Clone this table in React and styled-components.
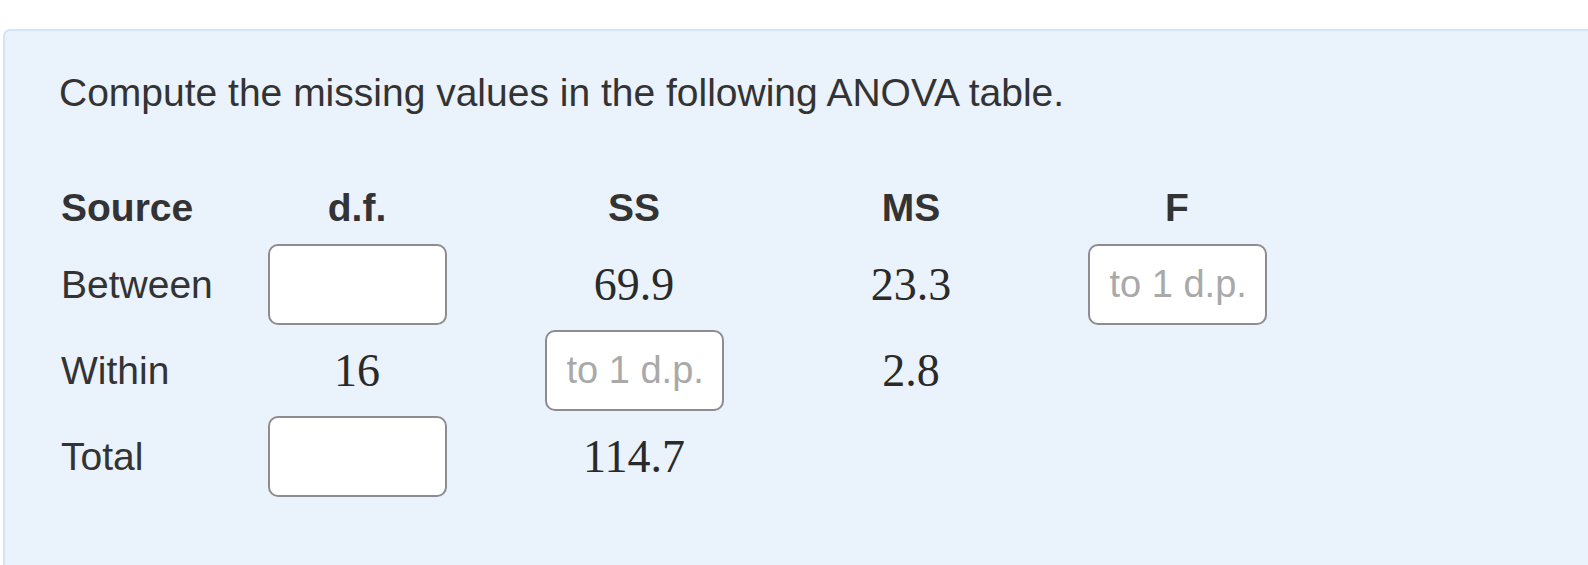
import React from 'react';
import styled, { createGlobalStyle } from 'styled-components';

const GlobalStyle = createGlobalStyle`
  html, body {
    margin: 0;
    padding: 0;
    background: #ffffff;
    overflow: hidden;
  }
  body {
    padding: 29px 0 0 3px;
    font-family: "Liberation Sans", Arial, Helvetica, sans-serif;
    color: #333333;
  }
`;

// rows of the anova table, null = answer box
const rows = [
  { source: 'Between', df: null, ss: '69.9', ms: '23.3', f: 'to 1 d.p.' },
  { source: 'Within', df: '16', ss: 'to 1 d.p.', ms: '2.8', f: '' },
  { source: 'Total', df: null, ss: '114.7', ms: '', f: '' },
];

function Cell({ value }) {
  if (value === null) return <AnswerBox type="text" />;
  if (value.startsWith('to 1')) return <AnswerBox type="text" placeholder={value} />;
  return <Number>{value}</Number>;
}

function App() {
  return (
    <>
      <GlobalStyle />
      <Panel>
        <Question>Compute the missing values in the following ANOVA table.</Question>

        <HeadRow>
          <HeadCell align="left">Source</HeadCell>
          <HeadCell>d.f.</HeadCell>
          <HeadCell>SS</HeadCell>
          <HeadCell>MS</HeadCell>
          <HeadCell>F</HeadCell>
        </HeadRow>

        <Body>
          {rows.map((r) => (
            <Row key={r.source}>
              <Label>{r.source}</Label>
              <Slot><Cell value={r.df} /></Slot>
              <Slot><Cell value={r.ss} /></Slot>
              <Slot><Cell value={r.ms} /></Slot>
              <Slot><Cell value={r.f} /></Slot>
            </Row>
          ))}
        </Body>
      </Panel>
    </>
  );
}

const columns = '158px 276px 278px 276px 256px';

const Panel = styled.div`
  box-sizing: border-box;
  margin-right: -20px;
  min-height: 620px;
  background: #eaf2fc;
  border: 2px solid #d3e3f8;
  border-radius: 7px;
  padding: 39px 0 0 56px;
`;

const Question = styled.p`
  margin: 0 0 67px -2px;
  font-size: 39px;
  line-height: 45px;
  color: #333333;
`;

const HeadRow = styled.div`
  display: grid;
  grid-template-columns: ${columns};
  height: 52px;
  align-items: center;
  margin-bottom: 10px;
`;

const HeadCell = styled.div`
  font-weight: bold;
  font-size: 39px;
  text-align: ${(p) => (p.align === 'left' ? 'left' : 'center')};
  color: #333333;
`;

const Body = styled.div`
  display: flex;
  flex-direction: column;
  gap: 5px;
`;

const Row = styled.div`
  display: grid;
  grid-template-columns: ${columns};
  height: 81px;
  align-items: center;
`;

const Label = styled.div`
  font-size: 39px;
  color: #333333;
`;

const Slot = styled.div`
  display: flex;
  justify-content: center;
  align-items: center;
`;

const Number = styled.span`
  font-family: "Liberation Serif", "Times New Roman", serif;
  font-size: 46px;
  color: #2a2a2a;
`;

const AnswerBox = styled.input`
  box-sizing: border-box;
  width: 179px;
  height: 81px;
  border: 2px solid #8c8c91;
  border-radius: 10px;
  background: #ffffff;
  padding: 0 20px;
  font-family: "Liberation Sans", Arial, sans-serif;
  font-size: 38px;
  color: #333333;
  outline: none;

  &::placeholder {
    color: #a9a9a9;
  }
`;

export default App;
